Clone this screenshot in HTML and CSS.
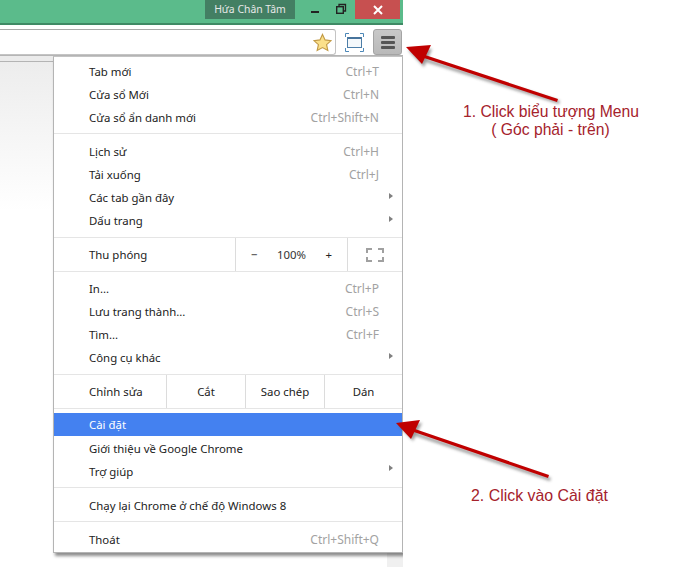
FILE: index.html
```html
<!DOCTYPE html>
<html lang="vi">
<head>
<meta charset="utf-8">
<title>Chrome menu</title>
<link rel="stylesheet" href="styles.css">
</head>
<body>
<div class="window">
  <header class="titlebar">
    <div class="profile">Hứa Chân Tâm</div>
    <div class="controls">
      <svg class="ctl" width="26" height="19" viewBox="0 0 26 19"><rect x="11" y="11" width="8" height="2" fill="#222"/></svg>
      <svg class="ctl" width="26" height="19" viewBox="0 0 26 19"><path d="M13 6V4.500h6.500v6.500H17.500" fill="none" stroke="#222" stroke-width="1.300"/><rect x="10.700" y="6.700" width="6.600" height="6.600" fill="none" stroke="#222" stroke-width="1.400"/></svg>
      <div class="close"><svg width="12" height="10" viewBox="0 0 12 10"><path d="M2 1l8 8M10 1l-8 8" stroke="#fff" stroke-width="2" fill="none"/></svg></div>
    </div>
  </header>
  <div class="toolbar">
    <div class="omnibox">
      <svg width="19" height="19" viewBox="0 0 20 19"><path d="M10 1l2.700 5.800 6.300.7-4.700 4.200 1.300 6.200L10 14.800 4.400 17.900l1.300-6.200L1 7.500l6.300-.7z" fill="#fbe08a" stroke="#c29a45" stroke-width="1.200"/></svg>
    </div>
    <svg class="cast" width="20" height="19" viewBox="0 0 20 19"><rect x="2.500" y="4.500" width="14" height="10" fill="#f4f8fb" stroke="#4d7ea8"/><rect x="3" y="4" width="13" height="2" fill="#47749c"/><path d="M.5 4V.5H4M15 .5h3.500V4M18.500 15v3.500H15M4 18.500H.5V15" fill="none" stroke="#4d88b8"/></svg>
    <div class="menu-btn"><span></span><span></span><span></span></div>
  </div>
  <main class="content">
    <div class="scrollbar"></div>
  </main>

  <nav class="menu">
    <div class="group">
      <div class="item"><span>Tab mới</span><span class="key">Ctrl+T</span></div>
      <div class="item"><span>Cửa sổ Mới</span><span class="key">Ctrl+N</span></div>
      <div class="item"><span>Cửa sổ ẩn danh mới</span><span class="key">Ctrl+Shift+N</span></div>
    </div>
    <div class="group before-band">
      <div class="item"><span>Lịch sử</span><span class="key">Ctrl+H</span></div>
      <div class="item"><span>Tải xuống</span><span class="key">Ctrl+J</span></div>
      <div class="item"><span>Các tab gần đây</span><i class="sub"></i></div>
      <div class="item"><span>Dấu trang</span><i class="sub"></i></div>
    </div>
    <div class="band zoom">
      <span class="band-label">Thu phóng</span>
      <div class="zoom-ctl"><span>−</span><span class="pct">100%</span><span>+</span></div>
      <div class="full"><svg width="18" height="14" viewBox="0 0 18 14"><path d="M1 5V1H6M12 1h5V5M17 9v4H12M6 13H1V9" fill="none" stroke="#a0a0a0" stroke-width="2"/></svg></div>
    </div>
    <div class="group before-band">
      <div class="item"><span>In...</span><span class="key">Ctrl+P</span></div>
      <div class="item"><span>Lưu trang thành...</span><span class="key">Ctrl+S</span></div>
      <div class="item"><span>Tìm...</span><span class="key">Ctrl+F</span></div>
      <div class="item"><span>Công cụ khác</span><i class="sub"></i></div>
    </div>
    <div class="band edit">
      <span class="band-label">Chỉnh sửa</span>
      <span class="cell cut">Cắt</span><span class="cell copy">Sao chép</span><span class="cell paste">Dán</span>
    </div>
    <div class="group roomy">
      <div class="item active"><span>Cài đặt</span></div>
      <div class="item"><span>Giới thiệu về Google Chrome</span></div>
      <div class="item"><span>Trợ giúp</span><i class="sub"></i></div>
    </div>
    <div class="group">
      <div class="item"><span>Chạy lại Chrome ở chế độ Windows 8</span></div>
    </div>
    <div class="group last">
      <div class="item"><span>Thoát</span><span class="key">Ctrl+Shift+Q</span></div>
    </div>
  </nav>
</div>

<svg class="arrows" width="676" height="567" viewBox="0 0 676 567">
  <defs><filter id="sh" x="-10%" y="-30%" width="120%" height="170%"><feGaussianBlur stdDeviation="1.500"/></filter></defs>
  <g fill="#5a5a5a" opacity=".6" filter="url(#sh)" transform="translate(2 3)">
    <path d="M558 98L422 55l-1 3 136 43z"/><path d="M406 47l24-1-8 18z"/>
    <path d="M549 475L412 429l-1 3 137 46z"/><path d="M396 422l24-2-9 18z"/>
  </g>
  <g fill="#c00000">
    <path d="M558 99L422 54l-1 3 136 45z"/><path d="M406 47l25-2-9 19z"/>
    <path d="M549 475L412 428l-1 3 137 47z"/><path d="M396 423l24-3-9 19z"/>
  </g>
</svg>
<div class="note note-one">1. Click biểu tượng Menu<br>( Góc phải - trên)</div>
<div class="note note-two">2. Click vào Cài đặt</div>
</body>
</html>
```
FILE: styles.css
```css
* { box-sizing: border-box; }
html, body { margin: 0; height: 567px; overflow: hidden; background: #fff; }
body { font-family: "Noto Sans", "Open Sans", sans-serif; font-size: 11.4px; color: #222; position: relative; }

.window { width: 403px; height: 567px; display: flex; flex-direction: column; position: relative; overflow: hidden; }

.titlebar { height: 25px; flex: none; background: #5bbb8b; border-bottom: 2px solid #3f8a65; display: flex; justify-content: flex-end; align-items: flex-start; padding-right: 3px; gap: 5px; }
.profile { width: 90px; height: 19px; background: #437f63; color: #e8e8e8; font-size: 10.4px; line-height: 19px; text-align: center; }
.controls { display: flex; align-items: flex-start; }
.ctl { display: block; }
.close { width: 45px; height: 19px; background: #c75050; display: flex; align-items: center; justify-content: center; margin-left: 3px; }

.toolbar { height: 31px; flex: none; background: #fff; display: flex; align-items: flex-start; padding-top: 4px; border-bottom: 1px solid #b5b5b5; }
.omnibox { width: 336px; height: 26px; border: 1px solid #c4c4c4; border-left: 0; border-top-color: #aaa; border-radius: 0 3px 3px 0; display: flex; justify-content: flex-end; align-items: center; padding-right: 3px; }
.cast { margin: 4px 8px 0 9px; display: block; }
.menu-btn { width: 29px; height: 26px; background: linear-gradient(#c8c8c8, #b9b9b9); border: 1px solid #a4a4a4; border-radius: 3px; display: flex; flex-direction: column; align-items: center; justify-content: center; gap: 2px; }
.menu-btn span { width: 14px; height: 3px; background: #555; border-radius: 1px; }

.content { flex: 1; position: relative; background: linear-gradient(#ececec, #fff 155px); display: flex; justify-content: flex-end; }
.content::before { content: ""; position: absolute; left: 0; right: 0; top: 0; height: 5px; background: #ebebeb; border-bottom: 1px solid #b4b4b4; }
.scrollbar { width: 16px; background: #f0f0f0; position: relative; }

.menu { position: absolute; left: 53px; top: 56px; width: 350px; height: 497px; background: #fff; border: 1px solid #b4b4b4; border-top-color: #c4c4c4; box-shadow: 2px 3px 3px rgba(0,0,0,.45); padding-top: 4px; }
.group { padding-bottom: 3px; border-bottom: 1px solid #e5e5e5; margin-bottom: 7px; }
.group.before-band { padding-bottom: 4px; margin-bottom: 0; }
.group.roomy { padding-bottom: 5px; }
.group.last { border-bottom: 0; padding-bottom: 0; margin-bottom: 0; }
.item { height: 23px; display: flex; align-items: center; justify-content: space-between; padding: 0 23px 2px 35px; position: relative; }
.roomy .item { padding-top: 2px; padding-bottom: 0; }
.roomy .item.active { padding-top: 0; padding-bottom: 0; }
.key { color: #a2a2a2; font-size: 12px; }
.sub { position: absolute; right: 9px; top: 6px; border-left: 4px solid #808080; border-top: 3.500px solid transparent; border-bottom: 3.500px solid transparent; }
.item.active { background: #4481f0; color: #fff; }

.band { height: 34px; border-bottom: 1px solid #e5e5e5; display: flex; align-items: stretch; }
.band.zoom { margin-bottom: 6px; }
.band.edit { margin-bottom: 4px; }
.band-label { width: 112px; padding-left: 35px; display: flex; align-items: center; }
.zoom .band-label { width: 181px; }
.zoom-ctl { width: 113px; border-left: 1px solid #dcdcdc; border-right: 1px solid #dcdcdc; display: flex; align-items: center; justify-content: space-between; padding: 0 15px; }
.full { flex: 1; display: flex; align-items: center; justify-content: center; }
.pct { color: #333; }
.cell { display: flex; align-items: center; justify-content: center; border-left: 1px solid #dcdcdc; }
.cut, .copy { width: 79px; }
.paste { flex: 1; }

.arrows { position: absolute; left: 0; top: 0; pointer-events: none; }
.note { position: absolute; font-family: "Liberation Sans", Arial, sans-serif; font-size: 15.7px; line-height: 18px; color: #a5222c; text-align: center; white-space: nowrap; }
.note-one { left: 463px; top: 103px; width: 175px; }
.note-two { left: 471px; top: 487px; font-size: 15.9px; }
```
